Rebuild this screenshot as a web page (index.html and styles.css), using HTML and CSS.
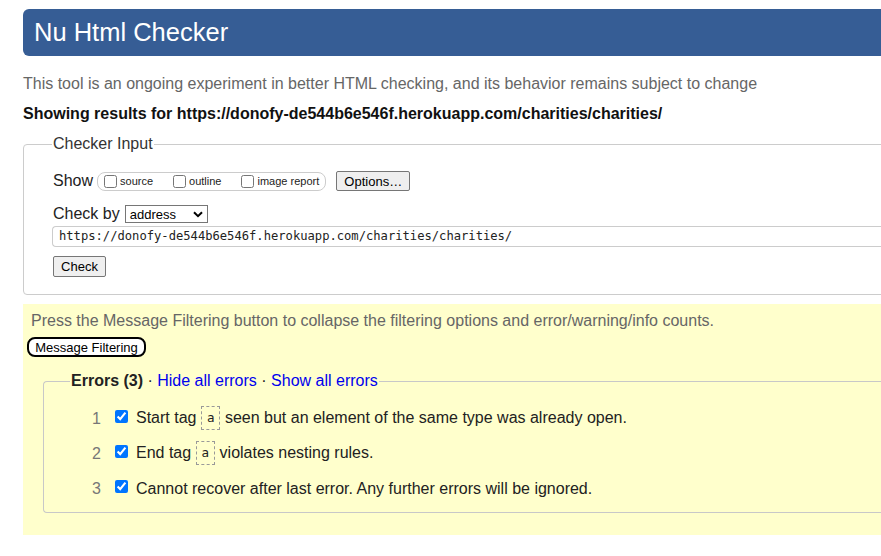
FILE: index.html
```html
<!DOCTYPE html>
<html lang="en">
<head>
<meta charset="utf-8">
<title>Nu Html Checker</title>
<link rel="stylesheet" href="styles.css">
</head>
<body>
<div class="page">
  <h1 class="banner">Nu Html Checker</h1>
  <p class="intro">This tool is an ongoing experiment in better HTML checking, and its behavior remains subject to change</p>
  <p class="showing">Showing results for https://donofy-de544b6e546f.herokuapp.com/charities/charities/</p>

  <fieldset class="input-box">
    <legend class="input-legend">Checker Input</legend>
    <div class="row show-row">
      <span class="row-label">Show</span>
      <span class="pill">
        <label class="opt"><input type="checkbox" class="cb"><span>source</span></label>
        <label class="opt"><input type="checkbox" class="cb"><span>outline</span></label>
        <label class="opt last"><input type="checkbox" class="cb"><span>image report</span></label>
      </span>
      <button class="btn options">Options…</button>
    </div>
    <div class="row by-row">
      <span class="row-label">Check by</span>
      <span class="select">address
        <svg class="chev" width="10" height="7" viewBox="0 0 10 7"><path d="M1 1.2 L5 5.2 L9 1.2" fill="none" stroke="#000" stroke-width="2"/></svg>
      </span>
    </div>
    <div class="url">https://donofy-de544b6e546f.herokuapp.com/charities/charities/</div>
    <button class="btn check">Check</button>
  </fieldset>

  <div class="results">
    <p class="filter-note">Press the Message Filtering button to collapse the filtering options and error/warning/info counts.</p>
    <button class="filter-btn">Message Filtering</button>
    <fieldset class="errors">
      <legend class="err-legend"><strong>Errors (3)</strong> · <a class="lnk">Hide all errors</a> · <a class="lnk">Show all errors</a></legend>
      <ul class="err-list">
        <li class="err"><span class="num">1</span><input type="checkbox" class="cb-on" checked><span class="msg">Start tag <code class="tag">a</code> seen but an element of the same type was already open.</span></li>
        <li class="err"><span class="num">2</span><input type="checkbox" class="cb-on" checked><span class="msg">End tag <code class="tag">a</code> violates nesting rules.</span></li>
        <li class="err"><span class="num">3</span><input type="checkbox" class="cb-on" checked><span class="msg">Cannot recover after last error. Any further errors will be ignored.</span></li>
      </ul>
    </fieldset>
  </div>
</div>
</body>
</html>
```

FILE: styles.css
```css
html, body {
  margin: 0;
  padding: 0;
  overflow: hidden;
  background: #fff;
}
body {
  font-family: "Liberation Sans", Arial, sans-serif;
  font-size: 16px;
  color: #222;
}
.page {
  width: 1000px;
  padding: 9px 0 0 23px;
}
.banner {
  margin: 0;
  height: 47px;
  line-height: 47px;
  background: #365d95;
  color: #fff;
  font-weight: normal;
  font-size: 25.5px;
  padding-left: 11px;
  border-radius: 6px;
}
.intro {
  margin: 19px 0 0;
  line-height: 18px;
  color: #666;
}
.showing {
  margin: 12px 0 0;
  line-height: 18px;
  font-weight: bold;
  color: #111;
}
.input-box {
  margin: 12px 0 0;
  border: 1px solid #ccc;
  border-radius: 4px;
  padding: 0 0 17px 29px;
}
.input-legend {
  padding: 0 1px;
  margin-left: -1px;
  line-height: 18px;
  color: #333;
}
.row {
  display: flex;
  align-items: center;
}
.show-row {
  margin-top: 18px;
  height: 20px;
}
.row-label {
  line-height: 18px;
  margin-right: 4px;
}
.by-row .row-label {
  margin-right: 5px;
}
.pill {
  display: flex;
  align-items: center;
  height: 17px;
  border: 1px solid #ccc;
  border-radius: 8px;
  padding: 0 6px 0 6px;
}
.opt {
  display: flex;
  align-items: center;
  font-size: 11px;
  margin-right: 20px;
}
.opt.last {
  margin-right: 0;
}
.cb {
  margin: 0 3px 0 0;
  width: 13px;
  height: 13px;
}
.btn {
  font-family: "Liberation Sans", Arial, sans-serif;
  font-size: 13px;
  background: #efefef;
  border: 1px solid #767676;
  border-radius: 2px;
  color: #000;
  padding: 0 7px;
  height: 21px;
}
.options {
  margin-left: 10px;
  width: 74px;
  height: 20px;
}
.by-row {
  margin-top: 14px;
  height: 18px;
}
.select {
  display: flex;
  align-items: center;
  justify-content: space-between;
  box-sizing: border-box;
  width: 83px;
  height: 18px;
  border: 1px solid #767676;
  font-size: 13px;
  padding: 0 4px 0 4px;
  color: #000;
}
.url {
  margin-top: 3px;
  margin-left: -1px;
  box-sizing: border-box;
  height: 21px;
  line-height: 19px;
  border: 1px solid #ccc;
  border-right: none;
  border-radius: 4px 0 0 4px;
  padding-left: 6px;
  font-family: "DejaVu Sans Mono", "Liberation Mono", monospace;
  font-size: 12.15px;
  color: #222;
}
.check {
  margin-top: 9px;
  width: 53px;
  display: block;
}
.results {
  margin-top: 9px;
  background: #ffffcc;
  padding: 8px 0 22px 0;
}
.filter-note {
  margin: 0 0 0 8px;
  line-height: 18px;
  color: #666;
}
.filter-btn {
  display: block;
  margin: 7px 0 0 4px;
  box-sizing: border-box;
  width: 119px;
  height: 20px;
  border: 2px solid #000;
  border-radius: 8px;
  background: #fff;
  font-family: "Liberation Sans", Arial, sans-serif;
  font-size: 13px;
  color: #000;
  padding: 0;
}
.errors {
  margin: 15px 0 0 20px;
  border: 1px solid #c8c8c8;
  border-right: none;
  border-radius: 4px 0 0 4px;
  padding: 0 0 6px 0;
}
.err-legend {
  margin-left: 26px;
  padding: 0 1px;
  line-height: 18px;
  color: #222;
}
.lnk {
  color: #0000ee;
  cursor: pointer;
}
.err-list {
  list-style: none;
  margin: 11px 0 0;
  padding: 0;
}
.err {
  display: flex;
  align-items: center;
  height: 35px;
}
.num {
  width: 57px;
  text-align: right;
  color: #777;
  flex: none;
}
.cb-on {
  margin: 0 8px 0 14px;
  width: 13px;
  height: 13px;
  position: relative;
  top: -2px;
}
.msg {
  line-height: 18px;
}
.tag {
  display: inline-block;
  box-sizing: border-box;
  height: 24px;
  line-height: 22px;
  padding: 0 5px;
  border: 1px dashed #999;
  font-family: "DejaVu Sans Mono", "Liberation Mono", monospace;
  font-size: 12.5px;
  color: #222;
  vertical-align: middle;
  position: relative;
  top: -1px;
}
```
